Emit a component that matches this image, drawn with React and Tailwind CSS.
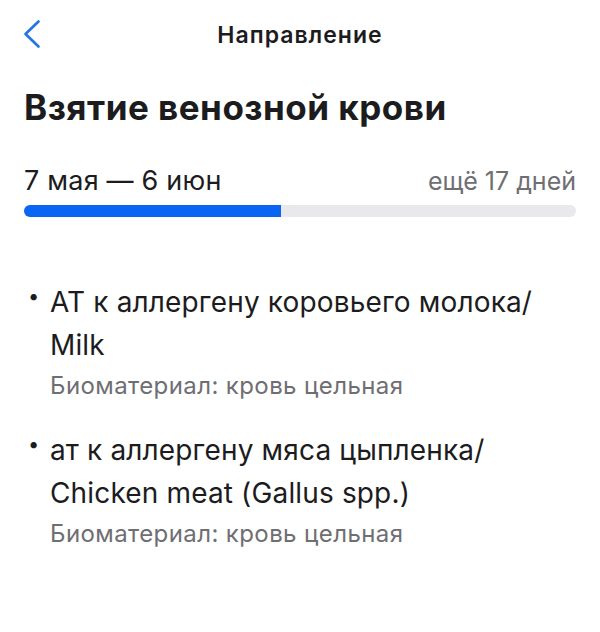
import React from "react";

const items = [
  {
    name: "АТ к аллергену коровьего молока/ Milk",
    material: "Биоматериал: кровь цельная",
  },
  {
    name: "ат к аллергену мяса цыпленка/ Chicken meat (Gallus spp.)",
    material: "Биоматериал: кровь цельная",
  },
];

const App = () => {
  const progress = 46.6; // прошло дней из периода

  return (
    <div
      className="min-h-[632px] w-[600px] bg-white text-[#1c1c1e]"
      style={{ fontFamily: "Inter, 'Noto Sans', sans-serif" }}
    >
      {/* шапка */}
      <div className="relative flex h-[70px] items-center justify-center">
        <button className="absolute left-[22px] top-[19px] p-0">
          <svg width="20" height="30" viewBox="0 0 20 30" fill="none">
            <path
              d="M16.5 2.5 L3.5 15 L16.5 27.5"
              stroke="#2474e5"
              strokeWidth="2.7"
              strokeLinecap="round"
              strokeLinejoin="round"
            />
          </svg>
        </button>
        <h1 className="text-[23px] font-semibold tracking-[1px]">Направление</h1>
      </div>

      <div className="px-6">
        <h2 className="mt-[18px] text-[35px] font-bold leading-[38px] tracking-[0.5px]">
          Взятие венозной крови
        </h2>

        <div className="mt-[40px] flex items-baseline justify-between">
          <span className="text-[27px] leading-[30px] tracking-[0.2px]">7 мая — 6 июн</span>
          <span className="text-[25px] leading-[30px] text-[#6e6e73]">ещё 17 дней</span>
        </div>

        <div className="mt-[9px] h-3 w-full overflow-hidden rounded-full bg-[#e9e9eb]">
          <div className="h-full bg-[#0a66f2]" style={{ width: `${progress}%` }} />
        </div>

        <ul className="mt-[64px] flex flex-col gap-[28px]">
          {items.map((it, i) => (
            <li key={i} className="flex">
              <span className="w-[26px] shrink-0 pl-[4px] text-[20px] leading-[30px]">•</span>
              <div>
                <p className="text-[28px] leading-[43px] tracking-[0.15px]">{it.name}</p>
                <p className="mt-[4px] text-[24px] leading-[30px] text-[#6e6e73] tracking-[0.4px]">
                  {it.material}
                </p>
              </div>
            </li>
          ))}
        </ul>
      </div>
    </div>
  );
};

export default App;
